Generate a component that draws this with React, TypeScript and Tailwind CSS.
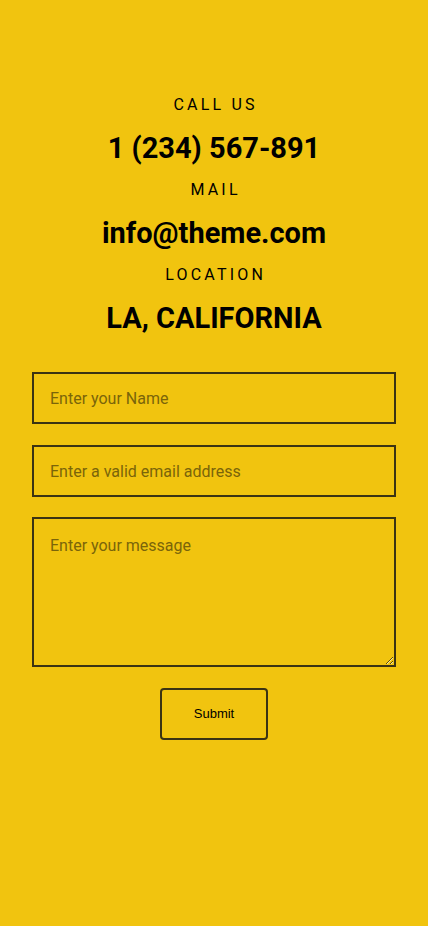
export default function App() {
  const contacts = [
    { label: 'CALL US', value: '1 (234) 567-891' },
    { label: 'MAIL', value: 'info@theme.com' },
    { label: 'LOCATION', value: 'LA, CALIFORNIA' },
  ];

  return (
    <div className="min-h-[926px] w-full bg-[#f1c40f] font-['Roboto',sans-serif] text-black">
      <div className="flex flex-col items-center pt-[93px]">
        {contacts.map((c) => (
          <div key={c.label} className="flex flex-col items-center">
            <p className="text-[16px] leading-[24px] tracking-[0.2em] pl-[0.2em]">{c.label}</p>
            <p className="mt-[14px] mb-[13px] text-[29px] leading-[34px] font-bold">{c.value}</p>
          </div>
        ))}
      </div>

      {/* Form */}
      <form className="flex flex-col px-[32px] pt-[24px]">
        <input
          type="text"
          placeholder="Enter your Name"
          className="h-[52px] w-full border-2 border-[#3b3313] bg-transparent px-[16px] text-[16px] outline-none placeholder:text-[#7a640a]"
        />
        <input
          type="email"
          placeholder="Enter a valid email address"
          className="mt-[21px] h-[52px] w-full border-2 border-[#3b3313] bg-transparent px-[16px] text-[16px] outline-none placeholder:text-[#7a640a]"
        />
        <textarea
          placeholder="Enter your message"
          className="mt-[20px] h-[150px] w-full border-2 border-[#3b3313] bg-transparent px-[16px] pt-[15px] text-[16px] outline-none placeholder:text-[#7a640a]"
        />
        <div className="flex justify-center pt-[21px]">
          <button
            type="button"
            className="h-[52px] w-[108px] rounded-[4px] border-2 border-[#3b3313] bg-transparent font-['Liberation_Sans',sans-serif] text-[13px]"
          >
            Submit
          </button>
        </div>
      </form>
    </div>
  );
}
